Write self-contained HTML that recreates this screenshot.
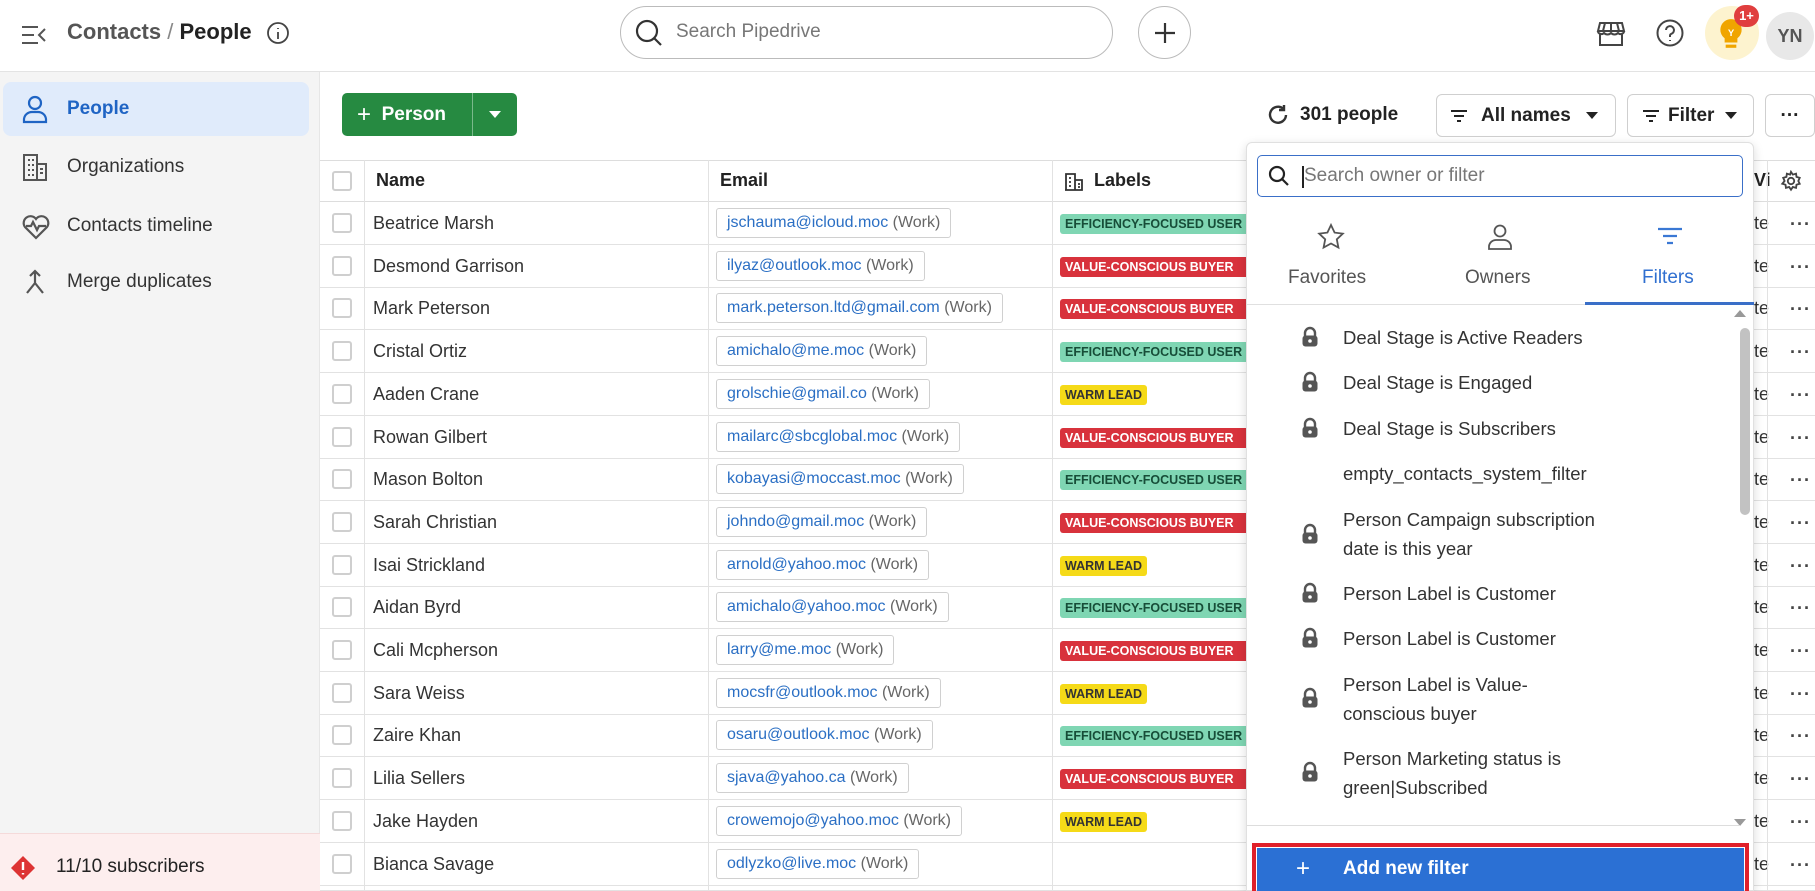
<!DOCTYPE html>
<html><head><meta charset="utf-8"><style>
*{box-sizing:border-box;margin:0;padding:0}
html{width:1815px;height:891px;overflow:hidden}
body{width:1815px;height:891px;overflow:hidden;font-family:"Liberation Sans",sans-serif;background:#fff;color:#222;position:relative}
.a{position:absolute}
.hdr{left:0;top:0;width:1815px;height:72px;border-bottom:1px solid #e3e3e3;background:#fff}
.side{left:0;top:72px;width:320px;height:819px;background:#f4f4f4;border-right:1px solid #e6e6e6}
.si{position:absolute;left:3px;width:306px;height:54px;display:flex;align-items:center;padding-left:64px;font-size:19px;color:#333;border-radius:8px}
.si svg{position:absolute;left:18px}
.row{position:absolute;left:320px;width:1495px;height:43px;border-bottom:1px solid #e2e2e2}
.cb{position:absolute;left:12px;top:11px;width:20px;height:20px;border:2px solid #cfcfcf;border-radius:3px;background:#fff}
.nm{position:absolute;left:53px;top:11px;font-size:18px;color:#333}
.em{position:absolute;left:396px;top:6px;height:30px;border:1px solid #d0d0d0;border-radius:3px;padding:0 10px;font-size:16px;line-height:28px;color:#2b6fc4;white-space:nowrap;background:#fff}
.em span{color:#666}
.lb{position:absolute;left:740px;top:12px;height:20px;padding:0 5px;font-size:12.5px;font-weight:bold;line-height:20px;border-radius:3px;white-space:nowrap;overflow:hidden}
.g{background:#7fd6b3;color:#174d38;width:190px}
.r{background:#d8323c;color:#fff;width:190px}
.y{background:#f5da18;color:#333}
.vl{position:absolute;left:1033px;top:0;width:1px;height:43px;background:#e2e2e2}
.te{position:absolute;left:1434px;top:11px;font-size:18px;color:#333}
.dt{position:absolute;left:1462px;top:0;width:1px;height:43px;background:#e2e2e2}
.dots{position:absolute;left:1470px;top:12px;font-size:18px;color:#444;letter-spacing:1px;font-weight:bold}
.btn{border:1px solid #cfcfcf;border-radius:6px;background:#fff;display:flex;align-items:center;font-size:19px;font-weight:bold;color:#222}
.fi{position:absolute;left:1343px;font-size:18.5px;color:#333;line-height:29px}
.lock{position:absolute;left:1301px}
</style></head><body>
<div class="a hdr"></div>
<svg class="a" style="left:20px;top:22px" width="28" height="26" viewBox="0 0 28 26" fill="none" stroke="#555" stroke-width="2"><path d="M2 5h16M2 13h12M2 21h16M25 7l-6 6 6 6"/></svg>
<div class="a" style="left:67px;top:19px;font-size:22px;color:#555;font-weight:bold">Contacts <span style="color:#888;font-weight:normal">/</span> <span style="color:#222">People</span></div>
<svg class="a" style="left:266px;top:21px" width="24" height="24" viewBox="0 0 24 24" fill="none" stroke="#444" stroke-width="1.8"><circle cx="12" cy="12" r="10"/><path d="M12 11v7M12 7v1"/></svg>
<div class="a" style="left:620px;top:6px;width:493px;height:53px;border:1px solid #bbb;border-radius:27px"></div>
<svg class="a" style="left:634px;top:18px" width="30" height="30" viewBox="0 0 30 30" fill="none" stroke="#333" stroke-width="2.2"><circle cx="13" cy="13" r="10"/><path d="M20 20l7 7"/></svg>
<div class="a" style="left:676px;top:21px;font-size:19px;color:#777">Search Pipedrive</div>
<div class="a" style="left:1138px;top:6px;width:53px;height:53px;border:1px solid #bbb;border-radius:50%"></div>
<svg class="a" style="left:1152px;top:20px" width="26" height="26" viewBox="0 0 26 26" stroke="#333" stroke-width="2.2"><path d="M13 3v20M3 13h20"/></svg>
<svg class="a" style="left:1596px;top:20px" width="30" height="28" viewBox="0 0 30 28" fill="none" stroke="#444" stroke-width="2"><path d="M4 3h22l2 8H2zM2 11c0 3 4 4 6 2 2 2 5 2 7 0 2 2 5 2 7 0 2 2 6 1 6-2M4 14v11h22V14M9 3l-2 8M21 3l2 8M15 3v8"/></svg>
<svg class="a" style="left:1655px;top:18px" width="30" height="30" viewBox="0 0 30 30" fill="none" stroke="#444" stroke-width="2"><circle cx="15" cy="15" r="12.5"/><path d="M11 12a4 4 0 1 1 5 4c-1 .5-1 1-1 3M15 22v1"/></svg>
<div class="a" style="left:1705px;top:6px;width:54px;height:54px;border-radius:50%;background:#fdf3cf"></div>
<svg class="a" style="left:1717px;top:17px" width="28" height="34" viewBox="0 0 24 32"><path d="M12 2a10 10 0 0 0-6 18v4h12v-4A10 10 0 0 0 12 2z" fill="#f0a500"/><rect x="7" y="26" width="10" height="3" fill="#f0a500"/><text x="12" y="18" font-size="9" font-weight="bold" fill="#fff" text-anchor="middle" font-family="Liberation Sans">Y</text></svg>
<div class="a" style="left:1734px;top:5px;width:25px;height:22px;border-radius:11px;background:#e03e3e;color:#fff;font-size:13px;font-weight:bold;text-align:center;line-height:22px">1+</div>
<div class="a" style="left:1766px;top:12px;width:48px;height:48px;border-radius:50%;background:#e8e8e8;color:#555;font-size:18px;font-weight:bold;text-align:center;line-height:48px">YN</div>

<div class="a side"></div>
<div class="si" style="top:82px;background:#e0ebfb;color:#1f64c4;font-weight:bold"><svg width="28" height="30" viewBox="0 0 28 30" fill="none" stroke="#1f64c4" stroke-width="2.2"><circle cx="14" cy="9" r="6"/><path d="M3 28v-3a8 8 0 0 1 8-7h6a8 8 0 0 1 8 7v3z"/></svg>People</div>
<div class="si" style="top:140px"><svg width="28" height="30" viewBox="0 0 28 30" fill="none" stroke="#555" stroke-width="2"><path d="M3 28V3h13v25M16 12h9v16H2M7 8h2M11 8h2M7 13h2M11 13h2M7 18h2M11 18h2M7 23h2M11 23h2M19 17h3M19 21h3"/></svg>Organizations</div>
<div class="si" style="top:199px"><svg width="30" height="30" viewBox="0 0 30 30" fill="none" stroke="#555" stroke-width="2.2"><path d="M15 27L4 16a6.5 6.5 0 0 1 11-8 6.5 6.5 0 0 1 11 8z"/><path d="M5 15h5l2-4 4 8 2-4h7"/></svg>Contacts timeline</div>
<div class="si" style="top:255px"><svg width="28" height="30" viewBox="0 0 28 30" fill="none" stroke="#555" stroke-width="2.2"><path d="M14 4v12l-8 10M14 16l8 10M9 9l5-5 5 5"/></svg>Merge duplicates</div>
<div class="a" style="left:0;top:833px;width:320px;height:58px;background:#fdeeee;border-top:1px solid #f5dada"></div>
<svg class="a" style="left:10px;top:855px" width="26" height="26" viewBox="0 0 26 26"><path d="M13 1l12 12-12 12L1 13z" fill="#d33"/><path d="M13 7v8M13 18v1.5" stroke="#fff" stroke-width="2.4"/></svg>
<div class="a" style="left:56px;top:856px;font-size:19px;color:#222">11/10 subscribers</div>

<div class="a" style="left:342px;top:93px;width:175px;height:43px;background:#268a41;border-radius:5px"></div>
<div class="a" style="left:472px;top:93px;width:1px;height:43px;background:#7ab98b"></div>
<div class="a" style="left:357px;top:101px;color:#fff;font-size:19px;font-weight:bold"><span style="font-size:24px;font-weight:normal;vertical-align:-2px">+</span>&nbsp; Person</div>
<svg class="a" style="left:488px;top:110px" width="14" height="9" viewBox="0 0 14 9"><path d="M1 1h12L7 8z" fill="#fff"/></svg>

<svg class="a" style="left:1267px;top:103px" width="22" height="24" viewBox="0 0 22 24" fill="none" stroke="#333" stroke-width="2.4"><path d="M19 12a8 8 0 1 1-3-6.5"/><path d="M17 2v5h-5"/></svg>
<div class="a" style="left:1300px;top:104px;font-size:19px;font-weight:bold;color:#222">301 people</div>
<div class="a btn" style="left:1436px;top:94px;width:180px;height:43px;padding-left:12px"><svg width="20" height="14" viewBox="0 0 20 14" stroke="#222" stroke-width="2"><path d="M2 2h16M5 7h10M8 12h4"/></svg><span style="margin-left:12px">All names</span><svg style="margin-left:14px" width="14" height="9" viewBox="0 0 14 9"><path d="M1 1h12L7 8z" fill="#222"/></svg></div>
<div class="a btn" style="left:1627px;top:94px;width:127px;height:43px;padding-left:13px"><svg width="20" height="14" viewBox="0 0 20 14" stroke="#222" stroke-width="2"><path d="M2 2h16M5 7h10M8 12h4"/></svg><span style="margin-left:7px">Filter</span><svg style="margin-left:10px" width="14" height="9" viewBox="0 0 14 9"><path d="M1 1h12L7 8z" fill="#222"/></svg></div>
<div class="a btn" style="left:1765px;top:94px;width:50px;height:43px;justify-content:center">···</div>

<div class="a" style="left:320px;top:160px;width:1495px;height:42px;border-top:1px solid #ddd;border-bottom:1px solid #ddd"></div>
<div class="a" style="left:332px;top:171px;width:20px;height:20px;border:2px solid #cfcfcf;border-radius:3px"></div>
<div class="a" style="left:364px;top:160px;width:1px;height:731px;background:#e2e2e2"></div>
<div class="a" style="left:708px;top:160px;width:1px;height:42px;background:#e2e2e2"></div>
<div class="a" style="left:1052px;top:160px;width:1px;height:42px;background:#e2e2e2"></div>
<div class="a" style="left:376px;top:170px;font-size:18px;font-weight:bold;color:#222">Name</div>
<div class="a" style="left:720px;top:170px;font-size:18px;font-weight:bold;color:#222">Email</div>
<svg class="a" style="left:1064px;top:172px" width="20" height="20" viewBox="0 0 20 20" fill="none" stroke="#333" stroke-width="1.8"><path d="M2 18V2h9v16M11 8h7v10H1M5 6h2M5 10h2M5 14h2M14 12h2M14 15h2"/></svg>
<div class="a" style="left:1094px;top:170px;font-size:18px;font-weight:bold;color:#222">Labels</div>
<div class="a" style="left:1754px;top:170px;font-size:18px;font-weight:bold;color:#222">Vi</div>
<div class="a" style="left:1767px;top:160px;width:1px;height:731px;background:#e2e2e2"></div>
<svg class="a" style="left:1780px;top:170px" width="22" height="22" viewBox="0 0 24 24" fill="none" stroke="#444" stroke-width="2"><circle cx="12" cy="12" r="3.5"/><path d="M12 2l2 3 3.5-1 .5 3.5 3.5 1-1.5 3.5 1.5 3-3.5 1-.5 3.5-3.5-1-2 3-2-3-3.5 1-.5-3.5-3.5-1L5 12 3.5 8.5l3.5-1L7.5 4 11 5z"/></svg>

<div id="rows"></div>
<script>
var d=[["Beatrice Marsh","jschauma@icloud.moc","g"],["Desmond Garrison","ilyaz@outlook.moc","r"],["Mark Peterson","mark.peterson.ltd@gmail.com","r"],["Cristal Ortiz","amichalo@me.moc","g"],["Aaden Crane","grolschie@gmail.co","y"],["Rowan Gilbert","mailarc@sbcglobal.moc","r"],["Mason Bolton","kobayasi@moccast.moc","g"],["Sarah Christian","johndo@gmail.moc","r"],["Isai Strickland","arnold@yahoo.moc","y"],["Aidan Byrd","amichalo@yahoo.moc","g"],["Cali Mcpherson","larry@me.moc","r"],["Sara Weiss","mocsfr@outlook.moc","y"],["Zaire Khan","osaru@outlook.moc","g"],["Lilia Sellers","sjava@yahoo.ca","r"],["Jake Hayden","crowemojo@yahoo.moc","y"],["Bianca Savage","odlyzko@live.moc",""],["Kyle Norris","kyle@mail.moc",""]];
var L={g:"EFFICIENCY-FOCUSED USER",r:"VALUE-CONSCIOUS BUYER",y:"WARM LEAD"};
var h="";d.forEach(function(r,i){var t=202+i*42.7;if(t>=891)return;h+='<div class="row" style="top:'+t+'px;height:'+Math.min(43,891-t)+'px;overflow:hidden"><div class="cb"></div><div class="nm">'+r[0]+'</div><div class="vl" style="left:388px"></div><div class="em">'+r[1]+' <span>(Work)</span></div><div class="vl" style="left:732px"></div>'+(r[2]?'<div class="lb '+r[2]+'">'+L[r[2]]+'</div>':'')+'<div class="te">te</div><div class="dt" style="left:1447px"></div><div class="dots">···</div></div>';});
document.getElementById("rows").innerHTML=h;
</script>

<div class="a" style="left:1246px;top:142px;width:508px;height:749px;background:#fff;border:1px solid #e0e0e0;border-radius:6px 6px 0 0;box-shadow:0 3px 10px rgba(0,0,0,.15)"></div>
<div class="a" style="left:1257px;top:155px;width:486px;height:42px;border:1.5px solid #3a6fc8;border-radius:5px"></div>
<svg class="a" style="left:1268px;top:165px" width="22" height="22" viewBox="0 0 22 22" fill="none" stroke="#222" stroke-width="2.2"><circle cx="9" cy="9" r="7"/><path d="M14 14l6 6"/></svg>
<div class="a" style="left:1302px;top:166px;width:2px;height:22px;background:#222"></div>
<div class="a" style="left:1304px;top:165px;font-size:19px;color:#777">Search owner or filter</div>
<svg class="a" style="left:1317px;top:223px" width="28" height="28" viewBox="0 0 28 28" fill="none" stroke="#555" stroke-width="1.8"><path d="M14 2l3.6 7.6 8.2 1-6 5.7 1.6 8.2L14 20.5l-7.4 4 1.6-8.2-6-5.7 8.2-1z"/></svg>
<div class="a" style="left:1288px;top:267px;font-size:19px;color:#555">Favorites</div>
<svg class="a" style="left:1487px;top:223px" width="26" height="28" viewBox="0 0 26 28" fill="none" stroke="#555" stroke-width="1.8"><circle cx="13" cy="8" r="5.5"/><path d="M2 26v-3a7 7 0 0 1 7-6h8a7 7 0 0 1 7 6v3z"/></svg>
<div class="a" style="left:1465px;top:267px;font-size:19px;color:#555">Owners</div>
<svg class="a" style="left:1657px;top:227px" width="26" height="20" viewBox="0 0 26 20" stroke="#3a78d4" stroke-width="2.2"><path d="M1 2h24M6 9h14M10 16h6"/></svg>
<div class="a" style="left:1642px;top:267px;font-size:19px;color:#2f6fd0">Filters</div>
<div class="a" style="left:1247px;top:304px;width:506px;height:1px;background:#e0e0e0"></div>
<div class="a" style="left:1585px;top:302px;width:169px;height:3px;background:#3a6fc8"></div>
<svg class="a" style="left:1734px;top:309px" width="12" height="8"><path d="M0 8L6 1l6 7z" fill="#999"/></svg>
<div class="a" style="left:1740px;top:328px;width:10px;height:187px;background:#c2c2c2;border-radius:5px"></div>
<svg class="a" style="left:1734px;top:819px" width="12" height="8"><path d="M0 0h12L6 7z" fill="#999"/></svg>

<div class="fi" style="top:323px">Deal Stage is Active Readers</div>
<div class="fi" style="top:368px">Deal Stage is Engaged</div>
<div class="fi" style="top:414px">Deal Stage is Subscribers</div>
<div class="fi" style="top:459px">empty_contacts_system_filter</div>
<div class="fi" style="top:505px">Person Campaign subscription<br>date is this year</div>
<div class="fi" style="top:579px">Person Label is Customer</div>
<div class="fi" style="top:624px">Person Label is Customer</div>
<div class="fi" style="top:670px">Person Label is Value-<br>conscious buyer</div>
<div class="fi" style="top:744px">Person Marketing status is<br>green|Subscribed</div>
<div id="locks"></div>
<script>
var ly=[337,382,428,534,593,638,698,772],s="";
ly.forEach(function(y){s+='<svg class="lock a" style="top:'+(y-11)+'px" width="18" height="22" viewBox="0 0 18 22"><path d="M4 10V7a5 5 0 0 1 10 0v3" fill="none" stroke="#555" stroke-width="2.4"/><rect x="1.5" y="9.5" width="15" height="11" rx="3" fill="#555"/><circle cx="9" cy="15" r="1.8" fill="#fff"/></svg>';});
document.getElementById("locks").innerHTML=s;
</script>
<div class="a" style="left:1247px;top:825px;width:493px;height:1px;background:#ddd"></div>
<div class="a" style="left:1252px;top:843px;width:497px;height:48px;border:4px solid #e0202a;border-bottom:none"></div>
<div class="a" style="left:1257px;top:848px;width:487px;height:43px;background:#2b70d4"></div>
<div class="a" style="left:1296px;top:855px;font-size:24px;color:#fff">+</div>
<div class="a" style="left:1343px;top:858px;font-size:19px;font-weight:bold;color:#fff">Add new filter</div>
</body></html>
